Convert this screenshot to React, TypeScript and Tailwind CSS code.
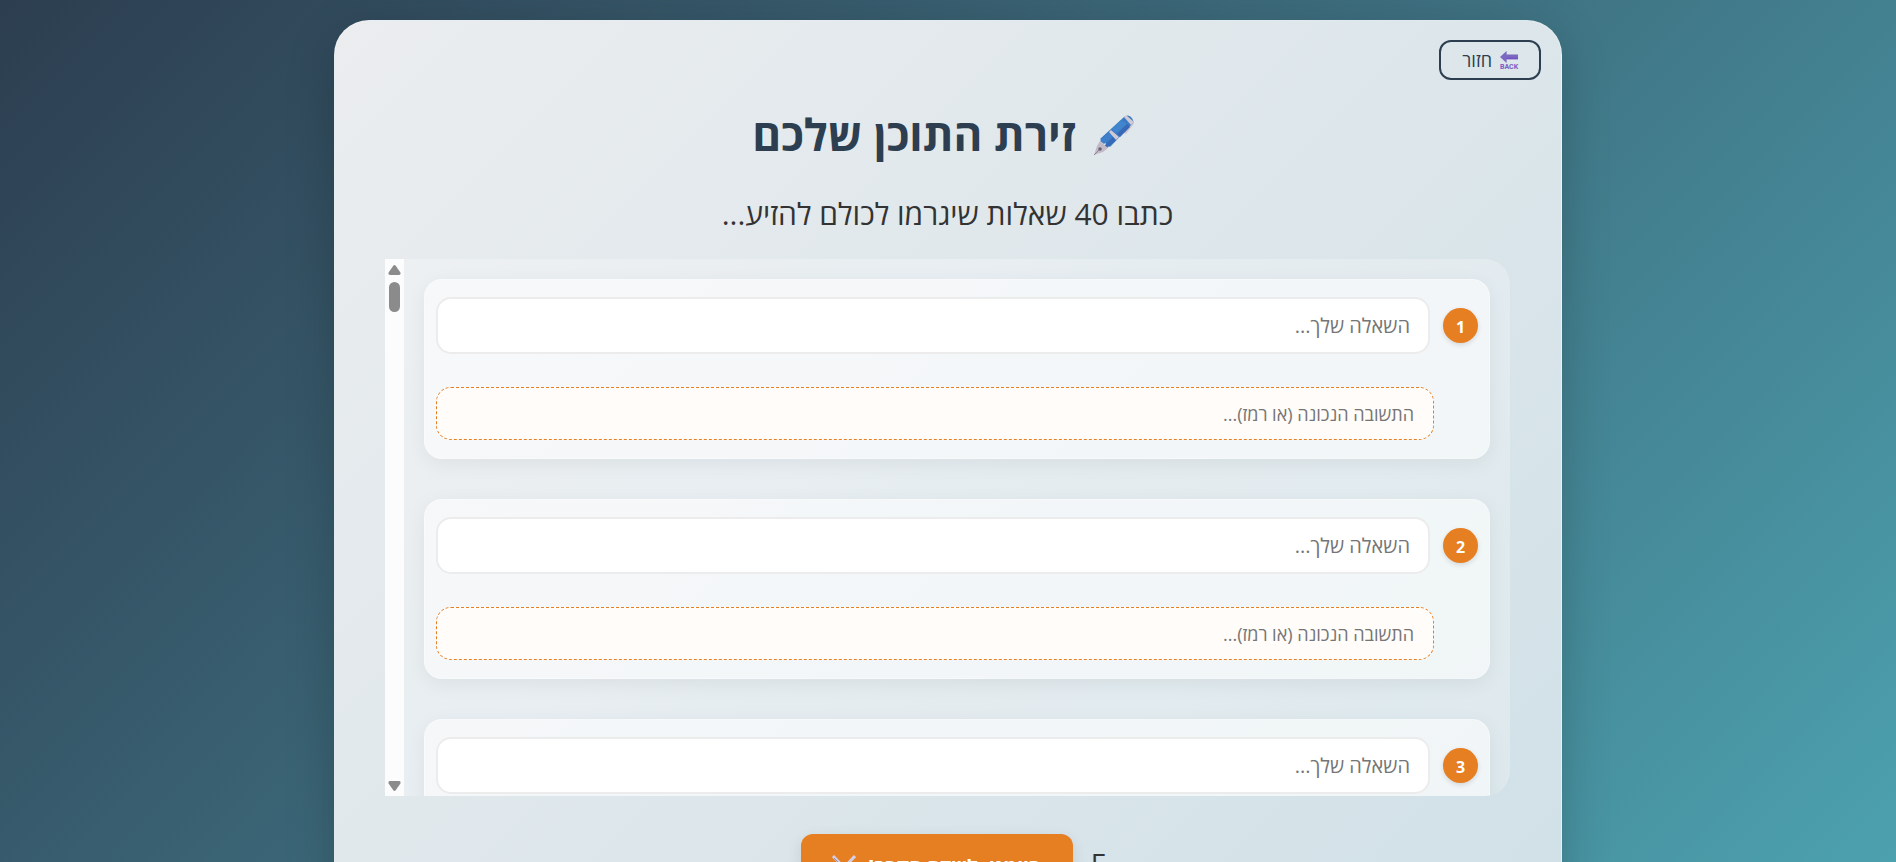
const items = Array.from({ length: 40 }, (_, i) => i + 1);

function BackIcon() {
  return (
    <svg viewBox="0 0 18 19" className="h-[19px] w-[18px] overflow-visible" aria-hidden="true">
      <path d="M0 6 6.6 0v3.4H18v4.8H6.6V12z" fill="#7b68c0" />
      <path d="M6.6 6.6H18v1.6H6.6z" fill="#7a50c8" />
      <text x="0" y="18.4" fontSize="7" fontWeight="700" style={{ direction: "ltr" }} fontFamily="Roboto" fill="#7b5cc4">BACK</text>
    </svg>
  );
}

function PenIcon() {
  return (
    <svg viewBox="0 0 40 40" className="mt-[2px] h-10 w-10" aria-hidden="true">
      <path d="M39 5q2 2 0 5l-7 9-2-1 7-9-2-2z" fill="#cdc5d3" />
      <path d="M30 2Q34-1 37 2t2 6L16 32 6 24z" fill="#3a7bc4" />
      <path d="M27 5 18 14l4 4 11-9z" fill="#4085cd" />
      <path d="M15 17 6 26l4 3 10-9z" fill="#3f80ca" />
      <path d="M13 33 24 23l-3-3-11 11zM26 22l10-10-3-3-10 10z" fill="#3769b6" />
      <path d="m30 2 2-2 8 7-3 3zM15 17l2-2 8 7-3 3z" fill="#cfc9d5" />
      <path d="m6 26 8 7-5 4-9 3 3-9z" fill="#c3bac8" />
      <circle cx="6" cy="34" r="1.8" fill="#686477" />
      <path d="m0 40 5-5" stroke="#8f8799" strokeWidth="1" />
    </svg>
  );
}

function SwordsIcon() {
  return (
    <svg viewBox="0 0 24 24" className="h-6 w-6" aria-hidden="true">
      <path d="M1 1 18 19M23 1 6 19" stroke="#d3cfe2" strokeWidth="3" />
      <path d="M2 3 18 20" stroke="#8f88ad" strokeWidth="1" />
      <path d="m3 16 5 5m8 0 5-5M2 23l4-4m16 4-4-4" stroke="#8b5e4b" strokeWidth="2" />
    </svg>
  );
}

function ScrollRail() {
  return (
    <div className="flex w-[19px] shrink-0 flex-col items-center bg-[#fcfcfc] pt-[6px] pb-[5px]" aria-hidden="true">
      <svg viewBox="0 0 13 10" className="h-[10px] w-[13px]">
        <path d="M5.3.8Q6.5-.6 7.7.8L12.4 7.5Q13 10 11 10H2Q0 10 .6 7.5z" fill="#8b8b8b" />
      </svg>
      <div className="mt-[7px] h-[30px] w-[11px] rounded-full bg-[#8b8b8b]" />
      <svg viewBox="0 0 13 10" className="mt-auto h-[10px] w-[13px]">
        <path d="M5.3 9.2Q6.5 10.6 7.7 9.2L12.4 2.5Q13 0 11 0H2Q0 0 .6 2.5z" fill="#8b8b8b" />
      </svg>
    </div>
  );
}

function QuestionCard({ n }: { n: number }) {
  return (
    <li className="flex flex-col gap-[33px] rounded-[18px] border border-white/30 bg-white/55 px-[11px] pt-[17px] pb-[18px] shadow-[0_5px_20px_rgba(0,0,0,0.06)]">
      <div className="flex items-center gap-[13px]">
        <span className="flex size-[35px] shrink-0 items-center justify-center rounded-full bg-[#e67e22] pt-[2px] text-base font-bold text-white shadow-[0_2px_5px_rgba(0,0,0,0.12)]">
          {n}
        </span>
        <input
          type="text"
          aria-label={`שאלה ${n}`}
          placeholder="השאלה שלך..."
          className="h-[57px] min-w-0 flex-1 rounded-[15px] border-2 border-[#ececec] bg-white px-[18px] text-[20px] placeholder:text-[#757575] outline-none"
        />
      </div>
      <input
        type="text"
        aria-label={`תשובה ${n}`}
        placeholder="התשובה הנכונה (או רמז)..."
        className="mr-[44px] h-[53px] rounded-[15px] border border-dashed border-[#e67e22] bg-[#fffcf9] px-[19px] text-[18px] placeholder:text-[#757575] outline-none"
      />
    </li>
  );
}

export default function App() {
  return (
    <div
      dir="rtl"
      className="h-screen overflow-hidden bg-linear-135 from-[#2c3e50] to-[#4ca1af] px-5 pt-5 font-['Open_Sans','Noto_Sans',sans-serif] text-[#333]"
    >
      <main className="mx-auto flex min-h-[1000px] max-w-[1228px] flex-col rounded-[35px] border border-white/30 bg-linear-135 from-[#ebedef] to-[#cfe0e7] pt-[19px] pr-[51px] pl-[50px] shadow-[0_15px_50px_rgba(0,0,0,0.2)]">
        <button
          type="button"
          className="-mr-[31px] flex h-10 w-[102px] items-center gap-2 self-start rounded-[12px] border-2 border-[#2c3e50] pr-[21px] text-[18px] text-[#2c3e50]"
        >
          <BackIcon />
          חזור
        </button>
        <h1 className="mt-[24px] flex h-[60px] items-center justify-center gap-[18px] pr-[9px] text-[44px] font-bold text-[#2c3e50]">
          <PenIcon />
          זירת התוכן שלכם
        </h1>
        <p className="mt-[27px] h-[45px] text-center text-[30px] leading-[45px]">כתבו 40 שאלות שיגרמו לכולם להזיע...</p>
        <section className="mt-[23px] flex h-[537px] overflow-hidden rounded-r-[25px] bg-white/25">
          <ul className="flex min-w-0 flex-1 flex-col gap-10 overflow-y-auto p-5 [scrollbar-width:none]">
            {items.map((n) => (
              <QuestionCard key={n} n={n} />
            ))}
          </ul>
          <ScrollRail />
        </section>
        <div className="mt-[38px] flex items-start justify-center gap-[18px] pl-[12px]">
          <span className="pt-[8px] text-[28px]">E</span>
          <button
            type="button"
            className="flex h-[66px] w-[272px] items-center justify-center gap-[12px] rounded-[12px] bg-[#e67e22] text-[20px] font-bold text-white shadow-[0_5px_15px_rgba(0,0,0,0.1)]"
          >
            סיימנו, לשדה הקרב!
            <SwordsIcon />
          </button>
        </div>
      </main>
    </div>
  );
}
